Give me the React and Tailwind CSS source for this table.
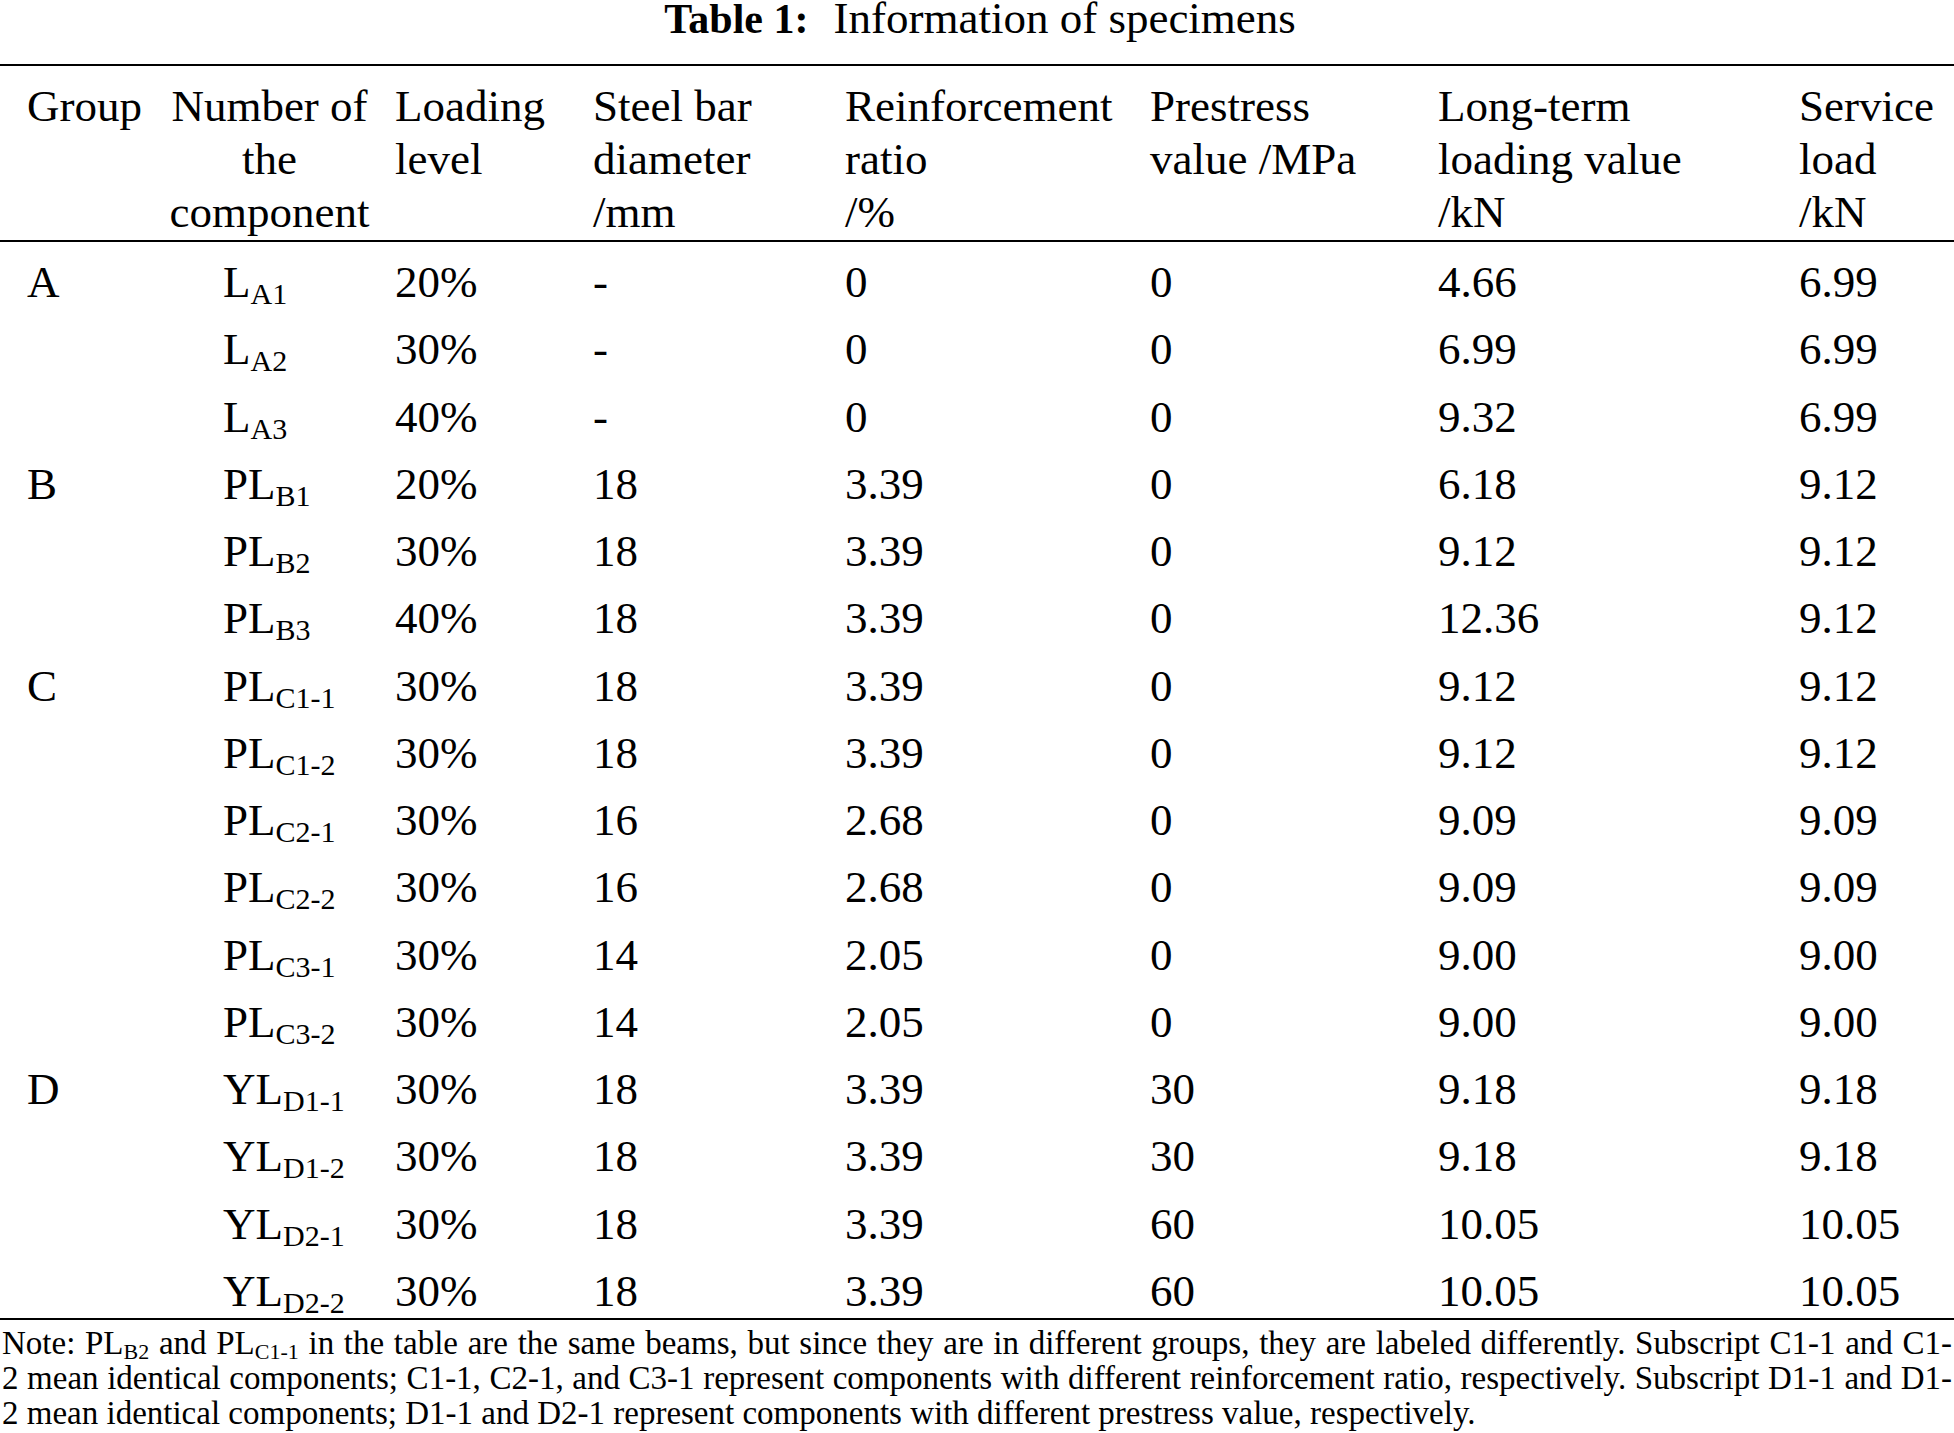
const rows = [
  ['A', 'L', 'A1', '20%', '-', '0', '0', '4.66', '6.99'],
  ['', 'L', 'A2', '30%', '-', '0', '0', '6.99', '6.99'],
  ['', 'L', 'A3', '40%', '-', '0', '0', '9.32', '6.99'],
  ['B', 'PL', 'B1', '20%', '18', '3.39', '0', '6.18', '9.12'],
  ['', 'PL', 'B2', '30%', '18', '3.39', '0', '9.12', '9.12'],
  ['', 'PL', 'B3', '40%', '18', '3.39', '0', '12.36', '9.12'],
  ['C', 'PL', 'C1-1', '30%', '18', '3.39', '0', '9.12', '9.12'],
  ['', 'PL', 'C1-2', '30%', '18', '3.39', '0', '9.12', '9.12'],
  ['', 'PL', 'C2-1', '30%', '16', '2.68', '0', '9.09', '9.09'],
  ['', 'PL', 'C2-2', '30%', '16', '2.68', '0', '9.09', '9.09'],
  ['', 'PL', 'C3-1', '30%', '14', '2.05', '0', '9.00', '9.00'],
  ['', 'PL', 'C3-2', '30%', '14', '2.05', '0', '9.00', '9.00'],
  ['D', 'YL', 'D1-1', '30%', '18', '3.39', '30', '9.18', '9.18'],
  ['', 'YL', 'D1-2', '30%', '18', '3.39', '30', '9.18', '9.18'],
  ['', 'YL', 'D2-1', '30%', '18', '3.39', '60', '10.05', '10.05'],
  ['', 'YL', 'D2-2', '30%', '18', '3.39', '60', '10.05', '10.05'],
];

const cols = 'grid grid-cols-[169px_226px_198px_252px_305px_288px_361px_1fr]';

function Sub({ children }) {
  return <span className="text-[30px] leading-[0] align-[-7px]">{children}</span>;
}

function NoteSub({ children }) {
  return <span className="text-[22px] leading-[0] align-[-5px]">{children}</span>;
}

export default function App() {
  return (
    <div className="w-[1954px] min-h-[1433px] bg-white text-black font-['Liberation_Serif','Times_New_Roman',serif]">
      {/* caption */}
      <div className="h-[36px] flex justify-center items-baseline leading-[36px] whitespace-nowrap pl-[6px]">
        <span className="font-bold text-[42px]">Table 1:</span>
        <span className="ml-[25px] text-[45px]">Information of specimens</span>
      </div>

      <div className="mt-[28px] border-t-2 border-black" />

      {/* header */}
      <div className={`${cols} text-[45px] leading-[53px] pt-[14px] pb-[1px]`}>
        <div className="pl-[27px]">Group</div>
        <div className="w-[201px] text-center">Number of<br />the<br />component</div>
        <div>Loading<br />level</div>
        <div>Steel bar<br />diameter<br />/mm</div>
        <div>Reinforcement<br />ratio<br />/%</div>
        <div>Prestress<br />value /MPa</div>
        <div>Long-term<br />loading value<br />/kN</div>
        <div>Service<br />load<br />/kN</div>
      </div>

      <div className="border-t-2 border-black" />

      {/* body */}
      <div>
        {rows.map((r, i) => (
          <div key={i} className={`${cols} h-[67.25px] pt-[14px] text-[45px] leading-[53px] whitespace-nowrap`}>
            <div className="pl-[27px]">{r[0]}</div>
            <div className="pl-[54px]">{r[1]}<Sub>{r[2]}</Sub></div>
            <div>{r[3]}</div>
            <div>{r[4]}</div>
            <div>{r[5]}</div>
            <div>{r[6]}</div>
            <div>{r[7]}</div>
            <div>{r[8]}</div>
          </div>
        ))}
      </div>

      <div className="border-t-2 border-black" />

      {/* note */}
      <div className="pt-[6px] px-[2px] text-[33px] leading-[35px]">
        <div className="text-justify [text-align-last:justify] whitespace-nowrap">
          Note: PL<NoteSub>B2</NoteSub> and PL<NoteSub>C1-1</NoteSub> in the table are the same beams, but since they are in different groups, they are labeled differently. Subscript C1-1 and C1-
        </div>
        <div className="text-justify [text-align-last:justify] whitespace-nowrap">
          2 mean identical components; C1-1, C2-1, and C3-1 represent components with different reinforcement ratio, respectively. Subscript D1-1 and D1-
        </div>
        <div className="whitespace-nowrap">
          2 mean identical components; D1-1 and D2-1 represent components with different prestress value, respectively.
        </div>
      </div>
    </div>
  );
}
